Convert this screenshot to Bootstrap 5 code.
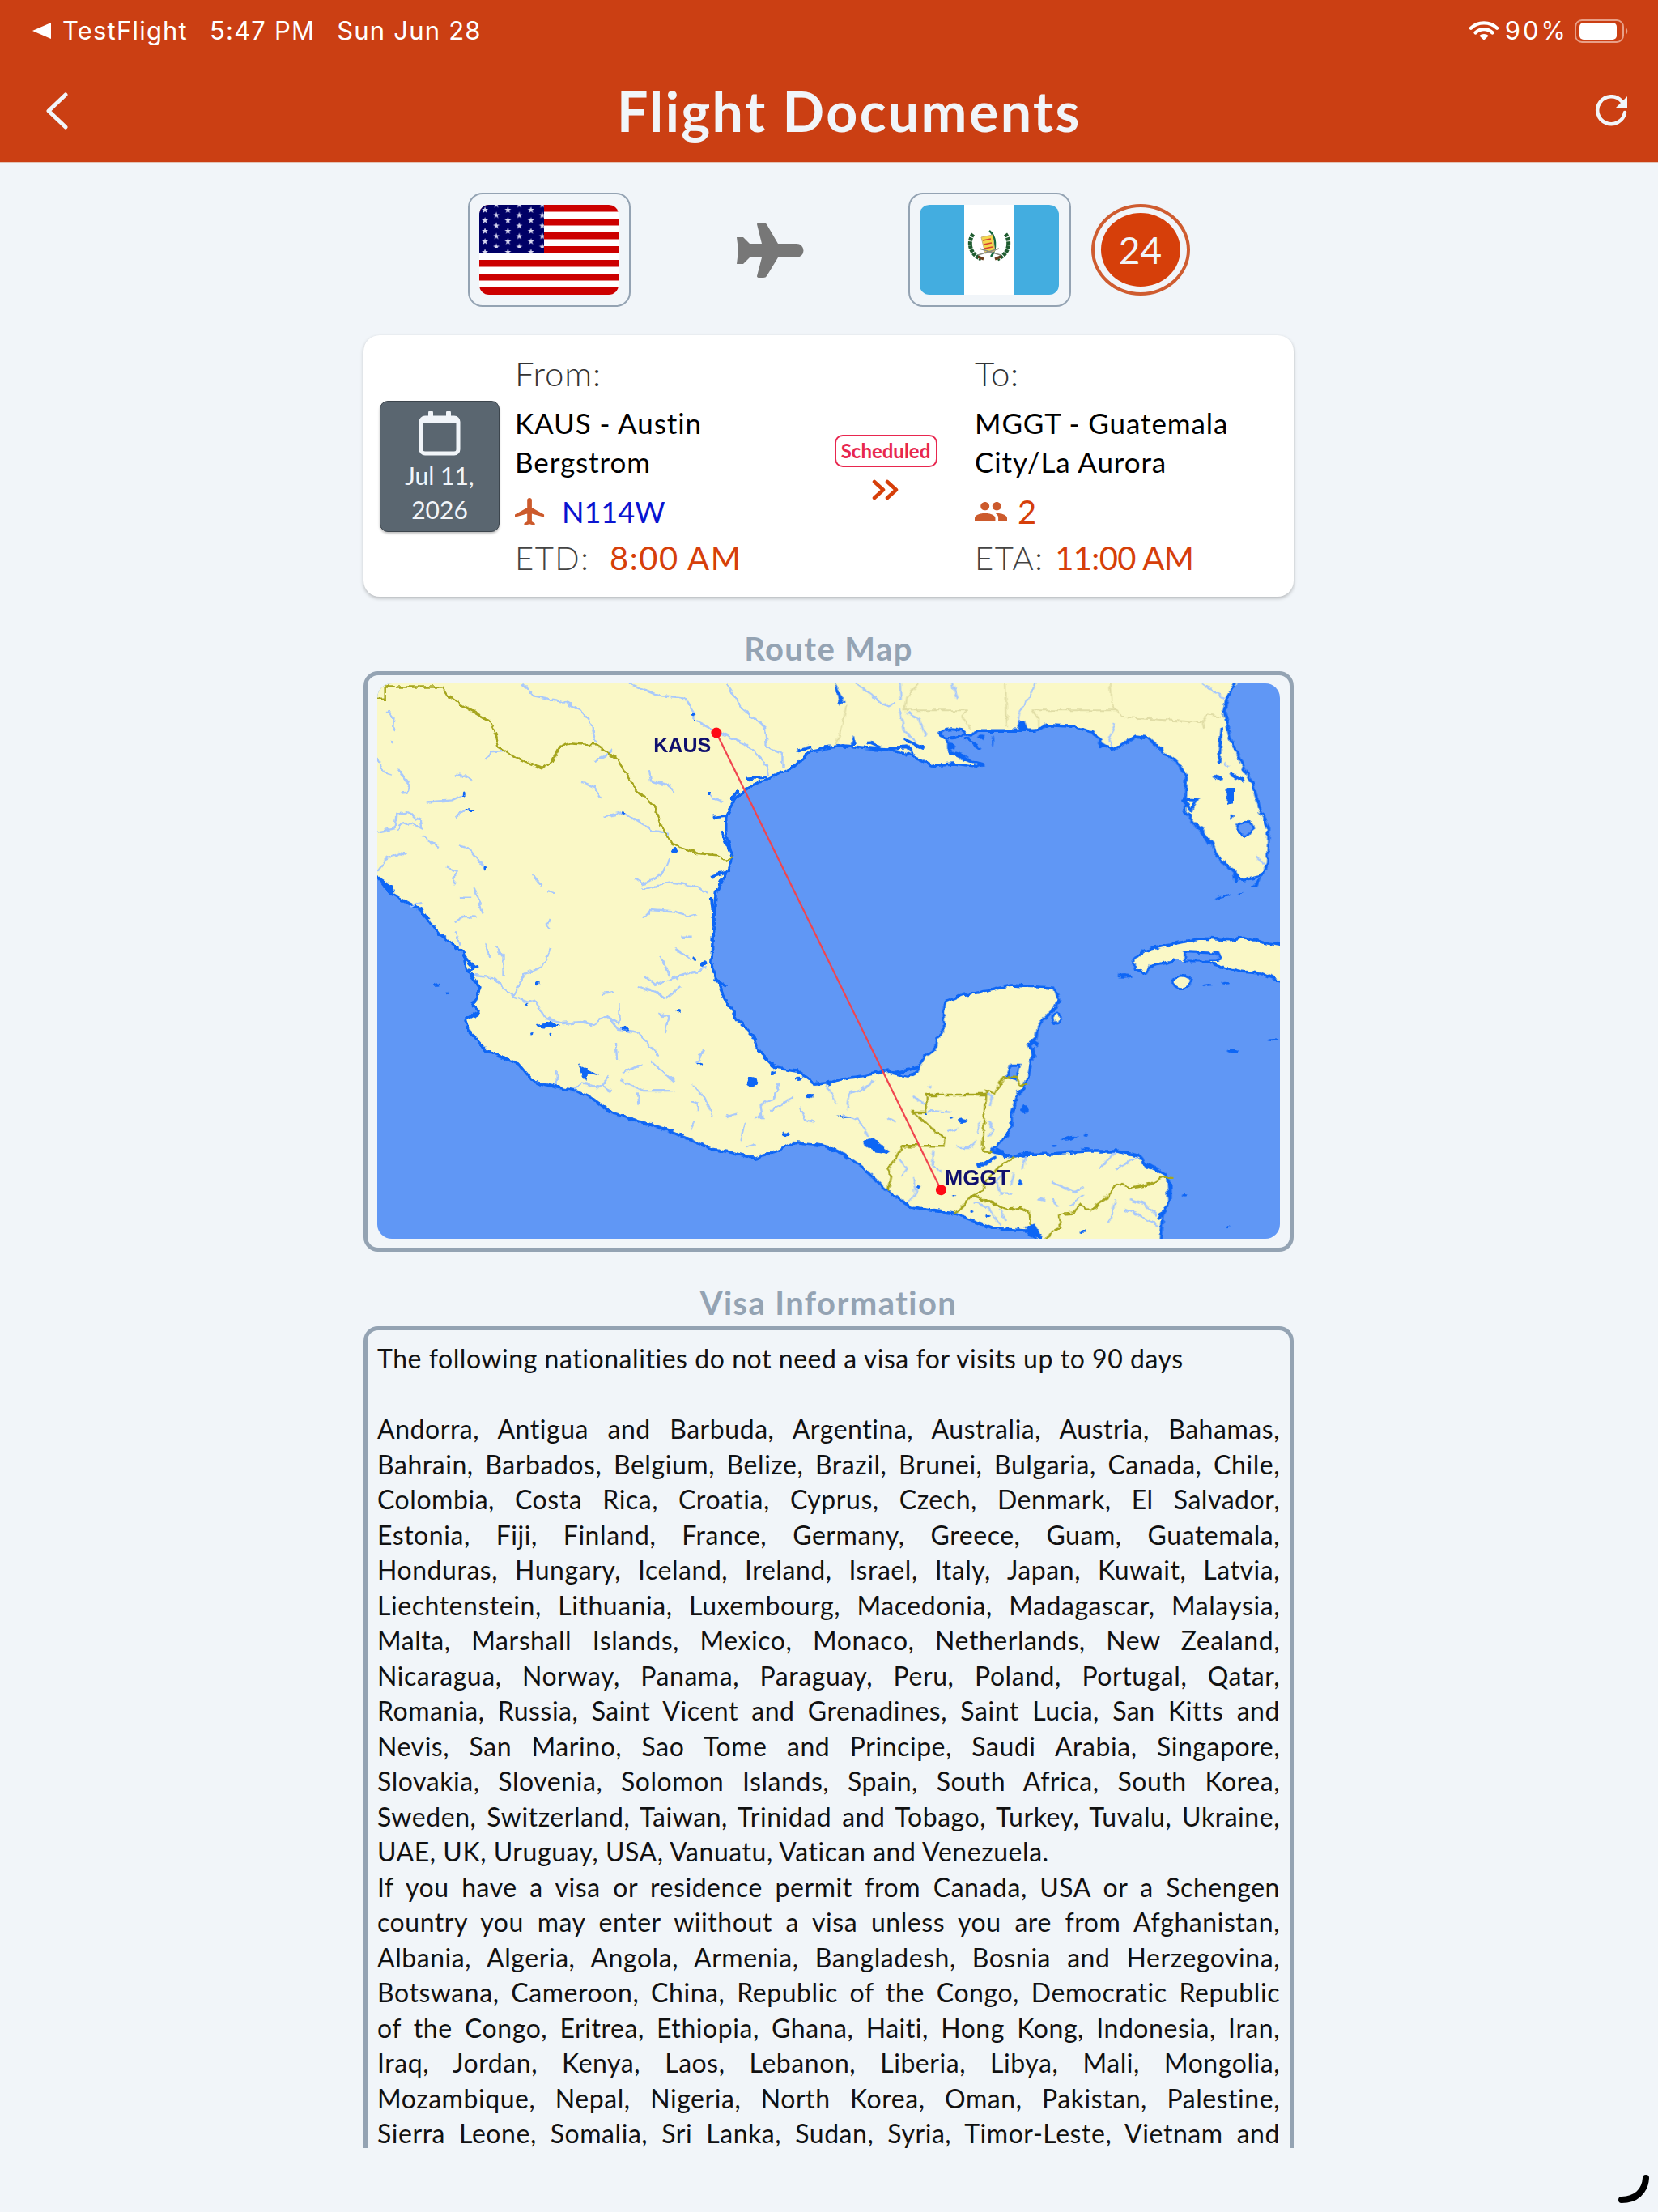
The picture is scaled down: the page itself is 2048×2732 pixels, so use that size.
<!DOCTYPE html>
<html lang="en">
<head>
<meta charset="UTF-8">
<title>Flight Documents</title>
<link href="https://cdn.jsdelivr.net/npm/bootstrap@5.3.2/dist/css/bootstrap.min.css" rel="stylesheet">
<style>
    html, body { height: 2732px; overflow: hidden; }
    body { background-color: #f1f5f9; font-family: Lato, "Noto Sans", sans-serif; position: relative; }
    .app-head { background-color: #cb3f13; height: 201px; color: #fff; border-bottom: 1px solid #e2c3b6; padding: 0 36px 0 40px; }
    .stat-row { height: 75px; font-family: Inter, sans-serif; font-size: 31px; letter-spacing: 1.2px; padding-top: 1px; }
    .stat-left span { margin-right: 27px; }
    .stat-left svg { margin-right: 13px; }
    .stat-pct { letter-spacing: 3px; }
    .nav-row { height: 125px; padding-left: 15px; }
    .back-ico { margin-top: 39px; }
    .page-name { font-size: 68px; font-weight: 700; letter-spacing: 2.4px; color: #f1f5f9; margin-left: 677px; margin-top: 7px; line-height: 110px; white-space: nowrap; }
    .reload-ico { margin-top: 42px; margin-left: auto; }
    .page-col { width: 1149px; margin-left: 449px; }
    .flag-row { padding-top: 37px; height: 178px; }
    .flag-box { width: 201px; height: 141px; border: 2.5px solid #94a3b3; border-radius: 18px; }
    .flag-box svg { border-radius: 12px; display: block; }
    .plane-big { margin: 37px 129px 0; }
    .count-ring { width: 122px; height: 113px; border: 4px solid #cf5c30; border-radius: 50%; padding: 7px 8px; margin: 14px 0 0 25px; }
    .count-fill { width: 100%; height: 100%; border-radius: 50%; background: #d63f0a; color: #f1f5f9; font-size: 46px; }
    .trip-card { margin-top: 35px; height: 323px; border: 0; border-radius: 20px; background: #fff; box-shadow: 0 2px 4px rgba(0,0,0,.25); padding: 0 20px; }
    .date-box { width: 148px; height: 162px; background: #5a6670; border: 1px solid #3c454d; border-radius: 10px; box-shadow: 0 2px 3px rgba(0,0,0,.25); color: #f1f5f9; font-size: 30px; line-height: 42px; text-align: center; margin-right: 19px; padding-top: 12px; }
    .date-box svg { display: block; margin: 0 auto 3px; }
    .from-col { width: 362px; }
    .mid-col { width: 192px; text-align: center; padding-top: 3px; }
    .to-col { margin-left: 14px; }
    .lbl-dir { font-size: 42px; font-weight: 300; letter-spacing: .8px; color: #333; line-height: 56px; margin-bottom: 9px; }
    .apt-name { font-size: 35px; letter-spacing: .9px; color: #000; line-height: 48px; margin-bottom: 10px; }
    .reg-row { font-size: 36px; line-height: 56px; color: #d63f0a; }
    .reg-row svg { margin-right: 20px; }
    .reg-row .ppl-ico { margin-right: 13px; }
    .ppl-num { font-size: 40px; }
    .tail-no { color: #0a14d0; }
    .time-row { font-size: 40px; letter-spacing: 1.5px; line-height: 58px; color: #d63f0a; white-space: nowrap; }
    .time-lbl { font-weight: 300; color: #444; margin-right: 13px; }
    .time-lbl-b { font-weight: 300; color: #444; margin-right: 2px; }
    .time-tight { letter-spacing: -.6px; }
    .sched-tag { display: inline-block; width: 127px; height: 40px; border: 2px solid #e8274f; border-radius: 10px; color: #e8274f; font-size: 24px; font-weight: 700; line-height: 36px; }
    .mid-col svg { display: block; margin: 15px auto 0; }
    .sect-name { text-align: center; color: #94a3b3; font-size: 40px; font-weight: 700; letter-spacing: 1.4px; line-height: 44px; margin-bottom: 6px; }
    .map-name { margin-top: 42px; }
    .visa-name { margin-top: 41px; margin-bottom: 7px; }
    .map-box { height: 717px; border: 5px solid #94a3b3; border-radius: 18px; padding: 10px 12px; }
    .map-svg { display: block; border-radius: 18px; width: 100%; height: 686px; }
    .m-fill { fill: #faf8c6; }
    .m-coast { fill: none; stroke: #1166f5; stroke-width: 3.5px; stroke-linejoin: round; vector-effect: non-scaling-stroke; }
    .m-riv { fill: none; stroke: #a9c9fb; stroke-width: 2.4px; vector-effect: non-scaling-stroke; }
    .m-bord { fill: none; stroke: #a5a51e; stroke-width: 2.5px; vector-effect: non-scaling-stroke; }
    .m-state { fill: none; stroke: #e0dda6; stroke-width: 2px; vector-effect: non-scaling-stroke; }
    .m-blob { fill: #1166f5; }
    .m-wet { fill: #6097f5; stroke: #1166f5; stroke-width: 3px; vector-effect: non-scaling-stroke; }
    .m-isle { fill: #faf8c6; stroke: #1166f5; stroke-width: 3px; vector-effect: non-scaling-stroke; }
    .m-thick { fill: none; stroke: #1166f5; stroke-width: 4px; stroke-linecap: round; vector-effect: non-scaling-stroke; }
    .m-label { font-family: "Liberation Sans", sans-serif; font-weight: 700; fill: #10106e; }
    .visa-box { height: 1015px; overflow: hidden; border: 5px solid #94a3b3; border-bottom: 0; border-radius: 18px 18px 0 0; padding: 13px 12px 0; color: #111; font-size: 32px; letter-spacing: .55px; line-height: 43.5px; }
    .visa-just { text-align: justify; text-align-last: justify; }
    .busy-arc { position: absolute; left: 1990px; top: 2680px; }
</style>
</head>
<body>

<!-- Cabecera -->
<header class="app-head">
    <div class="stat-row d-flex justify-content-between align-items-center">
        <div class="stat-left d-flex align-items-center">
            <svg width="24" height="20" viewBox="0 0 24 20"><path d="M23 0v20L0 10z" fill="#fff"/></svg>
            <span>TestFlight</span><span>5:47 PM</span><span>Sun Jun 28</span>
        </div>
        <div class="d-flex align-items-center">
            <svg width="36" height="24" viewBox="0 0 38 25" class="me-2"><path d="M2 9C11 0 27 0 36 9M8 15c6-6 16-6 22 0" fill="none" stroke="#fff" stroke-width="4.5" stroke-linecap="round"/><path d="M19 25l-6-6c3-3 9-3 12 0z" fill="#fff"/></svg>
            <span class="stat-pct">90%</span>
            <svg width="67" height="29" viewBox="0 0 67 29" class="ms-2"><rect x="1" y="1" width="59" height="27" rx="8" fill="none" stroke="#e8a088" stroke-width="2"/><rect x="6" y="4" width="46" height="21" rx="5" fill="#fff"/><path d="M63 10c3 1 3 8 0 9z" fill="#e8a088"/></svg>
        </div>
    </div>
    <div class="nav-row d-flex align-items-start">
        <svg class="back-ico" width="30" height="46" viewBox="0 0 30 46"><path d="M26 3L5 23l21 20" fill="none" stroke="#f1f5f9" stroke-width="5" stroke-linecap="round" stroke-linejoin="round"/></svg>
        <div class="page-name">Flight Documents</div>
        <svg class="reload-ico" width="42" height="40" viewBox="0 0 42 40"><path d="M33 8A17 17 0 1 0 37 22" fill="none" stroke="#f1f5f9" stroke-width="4.5" stroke-linecap="round"/><path d="M40 2v15H25z" fill="#f1f5f9"/></svg>
    </div>
</header>

<main class="page-col">
    <!-- Banderas -->
    <div class="flag-row d-flex justify-content-center align-items-start">
        <div class="flag-box d-flex align-items-center justify-content-center">
            <svg width="172" height="111" viewBox="0 0 172 111">
                <defs>
                    <pattern id="stA" width="28.4" height="13" patternUnits="userSpaceOnUse" x="2" y="1"><polygon points="5,1 6,4 9,4 6.6,5.8 7.5,9 5,7 2.5,9 3.4,5.8 1,4 4,4" fill="#d8d8f0"/></pattern>
                    <pattern id="stB" width="28.4" height="13" patternUnits="userSpaceOnUse" x="16" y="7.5"><polygon points="5,1 6,4 9,4 6.6,5.8 7.5,9 5,7 2.5,9 3.4,5.8 1,4 4,4" fill="#d8d8f0"/></pattern>
                </defs>
                <rect width="172" height="111" fill="#fff"/>
                <g fill="#cc0000"><rect y="0" width="172" height="8.5"/><rect y="17" width="172" height="8.5"/><rect y="34" width="172" height="8.5"/><rect y="51" width="172" height="8.5"/><rect y="68" width="172" height="8.5"/><rect y="85" width="172" height="8.5"/><rect y="102" width="172" height="9"/></g>
                <rect width="80" height="59" fill="#000066"/>
                <rect width="80" height="59" fill="url(#stA)"/>
                <rect width="80" height="53" fill="url(#stB)"/>
            </svg>
        </div>
        <svg class="plane-big" width="85" height="68" viewBox="0 0 85 68"><path d="M2 18h8l8 8h15L27 2q0-2 3-2h5q3 0 4 2l14 24h23a8.500 8.500 0 0 1 0 17H53L39 66q-1 2-4 2h-5q-3 0-3-2l6-23H18l-8 8H2l2-16.500z" fill="#777"/></svg>
        <div class="flag-box d-flex align-items-center justify-content-center">
            <svg width="172" height="111" viewBox="0 0 172 111">
                <rect width="172" height="111" fill="#fff"/>
                <rect width="55" height="111" fill="#43ade0"/><rect x="117" width="55" height="111" fill="#43ade0"/>
                <path d="M66 36c-6 8-6 24 10 31M106 36c6 8 6 24-10 31" fill="none" stroke="#1f5c30" stroke-width="5" stroke-dasharray="4 1"/>
                <path d="M86 32c8 6 10 22 2 32" fill="none" stroke="#14683e" stroke-width="2.500"/>
                <path d="M76 40l14-3 3 20-12 3z" fill="#f4d74c" stroke="#c9b27c"/>
                <path d="M78 44l10-2M79 49l10-2M80 54l10-2" stroke="#d64030" stroke-width="1.500"/>
                <path d="M72 62l26-8M100 62l-26-8" stroke="#8a8a80" stroke-width="1.500"/>
                <path d="M72 64l7 3M100 64l-7 3" stroke="#6b3d1c" stroke-width="3"/>
            </svg>
        </div>
        <div class="count-ring"><div class="count-fill d-flex align-items-center justify-content-center">24</div></div>
    </div>

    <!-- Tarjeta del vuelo -->
    <div class="card trip-card flex-row align-items-center">
        <div class="date-box">
            <svg width="52" height="55" viewBox="0 0 52 55"><path d="M15 2v8M37 2v8" stroke="#f1f5f9" stroke-width="6" stroke-linecap="round"/><rect x="3" y="8" width="46" height="44" rx="5" fill="none" stroke="#f1f5f9" stroke-width="5"/><rect x="3" y="8" width="46" height="7" fill="#f1f5f9"/></svg>
            Jul 11,<br>2026
        </div>
        <div class="from-col">
            <div class="lbl-dir">From:</div>
            <div class="apt-name">KAUS - Austin<br>Bergstrom</div>
            <div class="reg-row d-flex align-items-center"><svg width="38" height="34" viewBox="2 2 20 20" preserveAspectRatio="none"><path d="M21 16v-2l-8-5V3.500c0-.83-.67-1.500-1.500-1.500S10 2.670 10 3.500V9l-8 5v2l8-2.500V19l-2 1.500V22l3.500-1 3.500 1v-1.500L13 19v-5.500l8 2.500z" fill="#cc5a2c"/></svg><span class="tail-no">N114W</span></div>
            <div class="time-row"><span class="time-lbl">ETD:</span> 8:00 AM</div>
        </div>
        <div class="mid-col">
            <div class="sched-tag">Scheduled</div>
            <svg width="34" height="26" viewBox="0 0 34 26"><path d="M3 3l11 10L3 23M19 3l11 10-11 10" fill="none" stroke="#d63f0a" stroke-width="4.500" stroke-linecap="round" stroke-linejoin="round"/></svg>
        </div>
        <div class="to-col">
            <div class="lbl-dir">To:</div>
            <div class="apt-name">MGGT - Guatemala<br>City/La Aurora</div>
            <div class="reg-row d-flex align-items-center"><svg class="ppl-ico" width="40" height="24" viewBox="1 5 22 14" preserveAspectRatio="none"><path d="M16 11c1.660 0 2.990-1.340 2.990-3S17.660 5 16 5c-1.660 0-3 1.340-3 3s1.340 3 3 3zm-8 0c1.660 0 2.990-1.340 2.990-3S9.660 5 8 5C6.340 5 5 6.340 5 8s1.340 3 3 3zm0 2c-2.330 0-7 1.170-7 3.500V19h14v-2.500c0-2.330-4.670-3.500-7-3.500zm8 0c-.29 0-.62.02-.97.05 1.160.84 1.970 1.970 1.970 3.450V19h6v-2.500c0-2.330-4.670-3.500-7-3.500z" fill="#cc5a2c"/></svg><span class="ppl-num">2</span></div>
            <div class="time-row"><span class="time-lbl-b">ETA:</span> <span class="time-tight">11:00 AM</span></div>
        </div>
    </div>

    <!-- Mapa de la ruta -->
    <div class="sect-name map-name">Route Map</div>
    <div class="map-box">
        <svg class="map-svg" viewBox="0 0 1114 686" preserveAspectRatio="none">
            <defs>
                <filter id="jag" x="-2%" y="-2%" width="104%" height="104%" filterUnits="objectBoundingBox">
                    <feTurbulence type="fractalNoise" baseFrequency=".11" numOctaves="2" seed="4" result="n"/>
                    <feDisplacementMap in="SourceGraphic" in2="n" scale="7" xChannelSelector="R" yChannelSelector="G"/>
                </filter>
            </defs>
            <rect width="1114" height="686" fill="#6097f5"/>

            <g filter="url(#jag)">
            <!-- oeste: Mexico y Texas -->
            <g transform="scale(.35714,.4375)">
                <path class="m-fill" d="M-40 -40H1568V180L1500 190 1440 235 1350 270 1290 290 1235 325 1205 375 1205 420 1228 490 1210 530 1170 590 1160 700 1155 790 1170 830 1200 890 1240 945 1300 995 1320 1040 1375 1085 1450 1095 1510 1130 1568 1125V1310L1500 1300 1440 1295 1380 1320 1300 1340 1230 1325 1160 1315 1070 1285 1000 1260 920 1240 810 1212 740 1170 690 1150 620 1140 540 1125 490 1075 380 1040 320 985 305 950 350 930 330 910 355 860 310 810 295 760 220 710 150 640 50 595 0 545 -40 520Z"/>
                <path class="m-coast" d="M1568 180L1500 190 1440 235 1350 270 1290 290 1235 325 1205 375 1205 420 1228 490 1210 530 1170 590 1160 700 1155 790 1170 830 1200 890 1240 945 1300 995 1320 1040 1375 1085 1450 1095 1510 1130 1568 1125"/>
                <path class="m-coast" d="M1568 1310L1500 1300 1440 1295 1380 1320 1300 1340 1230 1325 1160 1315 1070 1285 1000 1260 920 1240 810 1212 740 1170 690 1150 620 1140 540 1125 490 1075 380 1040 320 985 305 950 350 930 330 910 355 860 310 810 295 760 220 710 150 640 50 595 0 545 -40 520"/>
                <path class="m-riv" d="M500 0L540 35 640 50 700 75 740 115 755 170M870 0L980 35 1060 40 1095 85 1095 105 1172 135 1270 170 1340 220 1355 260M1205 0L1260 70 1340 125 1345 180 1400 200 1400 240M35 75L60 100 55 135M50 160L52 172M0 210L25 255 50 260M70 240L110 285 105 310 85 312M265 265L285 255 330 275M170 335L260 330 300 315M270 378L300 360 335 358M380 215L390 195 440 192M750 220L790 205 810 185M705 280L750 295 775 325M940 245L945 275 1010 290 1025 305M785 378L850 365 950 415 1010 425M1145 310L1160 325 1195 335M0 420L60 410 65 370 100 365 150 385 155 410 120 395 80 400 70 415M155 432L215 462M285 458L315 465 370 520M0 530L30 495 75 480 105 485M240 520L270 530 265 570M335 575L365 650M285 605L325 605M265 675L300 658 340 660M115 630L155 620M270 700L285 740M370 735L390 775M410 745L435 770 435 825M1010 490L990 530 950 555 915 565 890 550M915 582L1020 562 1090 570 1140 590M920 660L945 640 1020 645 1080 658 1105 652M535 540L565 570M590 590L615 595M595 665L585 685 595 695M330 825L400 830 470 885 510 820 570 800 600 750M470 885L520 900 545 895 580 945 640 960 710 955 740 965 790 940 835 960 835 905M800 945L830 975 900 985 970 1050M1050 715L1090 715M1025 745L1085 780M980 770L1010 825M925 825L960 850 1010 835 1090 815 1140 805M900 855L960 870 1000 890 1050 855M780 875L820 870M975 930L1005 945 995 985M1110 1050L1130 1035 1105 1070M850 1100L915 1075M945 1065L1025 1125M840 1120L920 1150 1030 1150M1090 1130L1130 1170 1160 1220M1390 1125L1370 1170 1325 1190 1330 1225 1305 1225M1360 1205L1440 1170M1460 1200L1480 1235 1510 1240M1205 1225L1245 1215M1270 1240L1255 1290M1275 1310L1305 1300M620 1095L620 1135M680 1145L700 1130 770 1140 800 1110M825 1015L828 1065M1080 1260L1095 1235M1085 1180L1110 1185 1110 1205M900 1155L905 1190M775 1135L810 1150"/>
                <path class="m-bord" d="M-20 45L27 45 27 10 225 10 245 35 300 65 385 105 410 145 420 180 480 210 570 240 600 225 630 180 665 170 755 175 830 215 885 290 965 355 980 400 1020 455 1110 480 1170 485 1205 500 1230 490"/>
                <g class="m-blob">
                    <path d="M690 1075L715 1085 770 1108 725 1100 720 1125 705 1100Z"/>
                    <path d="M545 962L600 955 630 965 600 972 550 968Z"/>
                    <path d="M5 548L50 570 60 590 40 590Z"/>
                    <ellipse cx="1295" cy="1125" rx="18" ry="14"/>
                    <ellipse cx="1028" cy="472" rx="14" ry="8"/>
                    <ellipse cx="300" cy="312" rx="4" ry="7"/><ellipse cx="322" cy="358" rx="15" ry="3"/><ellipse cx="370" cy="520" rx="5" ry="7"/>
                    <ellipse cx="848" cy="365" rx="6" ry="5"/><ellipse cx="532" cy="987" rx="6" ry="4"/><ellipse cx="601" cy="987" rx="4" ry="4"/>
                    <ellipse cx="555" cy="847" rx="6" ry="4"/><ellipse cx="1043" cy="925" rx="6" ry="4"/><ellipse cx="1097" cy="778" rx="5" ry="5"/><ellipse cx="1128" cy="792" rx="9" ry="10"/>
                    <ellipse cx="1410" cy="1273" rx="14" ry="8"/><ellipse cx="1495" cy="1165" rx="9" ry="8"/><ellipse cx="1455" cy="1115" rx="10" ry="5"/><ellipse cx="1115" cy="1073" rx="10" ry="4"/>
                    <ellipse cx="855" cy="975" rx="14" ry="5"/><ellipse cx="1095" cy="88" rx="8" ry="4"/><ellipse cx="1095" cy="105" rx="4" ry="3"/><ellipse cx="205" cy="850" rx="12" ry="4"/><ellipse cx="240" cy="875" rx="5" ry="3"/>
                    <ellipse cx="520" cy="907" rx="5" ry="4"/><ellipse cx="1148" cy="312" rx="6" ry="7"/><ellipse cx="1368" cy="1098" rx="8" ry="8"/>
                </g>
                <path class="m-thick" d="M1280 268L1340 265M1455 190L1495 182M1225 325L1245 305M1165 378L1205 375M1190 420L1215 470M1160 545L1200 535M1155 610L1165 680M300 770L335 800M1170 835L1205 855M315 810L345 800"/>
                <path class="m-riv" style="stroke:#1166f5" d="M330 905L350 925 310 945"/>
            </g>

            <!-- este: Golfo, Luisiana y Florida -->
            <g transform="translate(554,0) scale(.35714,.33333)">
                <path class="m-fill" d="M0 -40H1420V0L1385 60 1375 100 1395 200 1440 310 1475 380 1500 470 1530 540 1525 670 1500 715 1440 730 1410 700 1350 640 1330 590 1280 530 1240 470 1245 350 1215 295 1160 250 1110 200 1070 195 1000 245 950 225 920 180 850 160 770 155 720 175 600 175 520 175 500 195 430 170 390 180 420 210 420 240 440 260 480 280 540 300 520 310 440 300 370 305 320 280 250 250 150 240 60 230 0 240Z"/>
                <path class="m-fill" d="M1060 1029L1100 990 1200 965 1290 945 1400 950 1440 940 1510 960 1600 975V1029Z"/>
                <path class="m-state" d="M70 80L55 160 35 230M320 0L280 50 272 100 485 100 470 120 495 165M620 0L625 160M710 100L1000 100 1020 125 1300 145 1320 115 1380 125M710 100L735 130 735 165M980 0L985 70 1000 100M1300 145L1305 165"/>
                <path class="m-riv" d="M100 0L210 85 240 70M255 0L258 60M435 0L455 55M725 0L670 110 665 150M255 100L270 175 310 215M280 110L320 130 345 195M1000 150L975 200 990 235M1300 0L1380 60M1485 640L1515 670M1375 295L1390 310"/>
                <path class="m-coast" d="M1420 -20L1385 60 1375 100 1395 200 1440 310 1475 380 1500 470 1530 540 1525 670 1500 715 1440 730 1410 700 1350 640 1330 590 1280 530 1240 470 1245 350 1215 295 1160 250 1110 200 1070 195 1000 245 950 225 920 180 850 160 770 155 720 175 600 175 520 175 500 195 430 170 390 180 420 210 420 240 440 260 480 280 540 300 520 310 440 300 370 305 320 280 250 250 150 240 60 230 0 240"/>
                <path class="m-coast" d="M1060 1029L1100 990 1200 965 1290 945 1400 950 1440 940 1510 960 1600 975"/>
                <path class="m-wet" d="M1240 1029L1240 995 1350 1000 1360 1020 1350 1029Z"/>
                <ellipse class="m-wet" cx="435" cy="185" rx="42" ry="18"/>
                <ellipse class="m-wet" cx="1447" cy="538" rx="25" ry="27"/>
                <g class="m-blob">
                    <path d="M30 0L65 70 45 80 35 30Z"/>
                    <path d="M85 225L95 195 105 225Z"/><path d="M140 208L195 235 185 242 140 222Z"/>
                    <path d="M670 135L685 135 700 180 655 180Z"/><path d="M760 145L785 155 735 178Z"/>
                    <path d="M1340 335L1370 350 1365 365 1335 345Z"/><path d="M1385 390L1410 390 1410 445 1385 450Z"/><path d="M1395 485L1410 487 1400 505Z"/>
                    <ellipse cx="535" cy="198" rx="10" ry="8"/><ellipse cx="578" cy="215" rx="3" ry="22"/><ellipse cx="430" cy="232" rx="12" ry="12"/>
                    <path d="M1340 798L1395 778 1390 790 1345 802Z"/><path d="M1415 783L1440 772 1430 783Z"/>
                    <path d="M1470 755L1505 715 1490 755Z"/>
                </g>
                <path class="m-thick" d="M1365 165L1358 290M1400 335L1440 360M1235 430L1280 432 1262 470 1240 440M1295 535L1320 590M1415 730L1410 695M1375 100L1385 60M270 208L335 240M215 240L280 235 300 260M430 255L480 270M485 205L530 240M950 225L950 235"/>
            </g>

            <!-- sur: Yucatan y Centroamerica -->
            <g transform="translate(554,343) scale(.35714,.33333)">
                <path class="m-fill" d="M0 455L60 435 130 425 215 405 240 415 250 410 320 390 340 360 375 330 385 285 405 265 405 190 415 150 470 125 560 110 640 90 720 95 790 100 805 145 790 175 750 215 730 250 725 290 700 310 715 340 705 380 690 460 660 500 640 560 640 610 620 650 570 705 640 725 690 715 760 715 900 705 1000 705 1080 720 1110 760 1175 790 1190 830 1190 880 1165 940 1155 1060H750L700 1000 580 990 440 935 300 915 215 855 120 760 50 710 0 685Z"/>
                <path class="m-fill" d="M1060 0L1065 30 1105 45 1115 20 1200 0ZM1310 0L1380 25 1440 40 1500 45 1600 85V0Z"/>
                <path class="m-riv" d="M0 460L40 530M70 550L80 490 130 470 165 440M60 570L110 590 150 650M300 500L340 530M355 470L365 460M350 555L430 560M215 585L240 600M420 630L455 620M550 490L575 500 565 540M555 590L580 620 560 650M450 690L500 690 520 670M525 590L525 640M370 700L365 750 395 780M250 730L280 770 265 800M300 800L310 860 290 890M650 780L640 830M690 715L680 770M945 770L1000 705M780 820L860 855 885 840M1000 770L1080 720M1050 885L1100 900 1140 940M1030 920L1080 940 1150 985M730 880L755 885M780 880L800 910M840 910L890 865M1000 880L980 970M600 920L620 960M510 895L560 910 600 980M620 780L590 820 600 860 640 860"/>
                <path class="m-coast" d="M0 455L60 435 130 425 215 405 240 415 250 410 320 390 340 360 375 330 385 285 405 265 405 190 415 150 470 125 560 110 640 90 720 95 790 100 805 145 790 175 750 215 730 250 725 290 700 310 715 340 705 380 690 460 660 500 640 560 640 610 620 650 570 705 640 725 690 715 760 715 900 705 1000 705 1080 720 1110 760 1175 790 1190 830 1190 880 1165 940 1155 1060"/>
                <path class="m-coast" d="M750 1060L700 1000 580 990 440 935 300 915 215 855 120 760 50 710 0 685"/>
                <path class="m-coast" d="M1060 0L1065 30 1105 45 1115 20 1200 0M1310 0L1380 25 1440 40 1500 45 1600 85"/>
                <path class="m-wet" d="M235 420L320 390 315 410 280 430Z"/>
                <path class="m-wet" d="M640 385L670 385 655 440 625 425Z"/>
                <path class="m-wet" d="M520 760L590 725 545 760Z"/>
                <ellipse class="m-isle" cx="795" cy="213" rx="13" ry="18"/>
                <ellipse class="m-isle" cx="1230" cy="78" rx="30" ry="24"/>
                <g class="m-blob">
                    <path d="M35 570L85 580 60 582Z"/><path d="M130 670L160 655 225 710 215 715 165 705 135 685Z"/>
                    <ellipse cx="470" cy="590" rx="18" ry="7"/><ellipse cx="430" cy="580" rx="8" ry="4"/><ellipse cx="345" cy="563" rx="5" ry="5"/><ellipse cx="320" cy="838" rx="8" ry="7"/>
                    <ellipse cx="440" cy="865" rx="5" ry="4"/><ellipse cx="503" cy="928" rx="5" ry="5"/><ellipse cx="560" cy="945" rx="7" ry="7"/><ellipse cx="665" cy="988" rx="5" ry="5"/><ellipse cx="672" cy="820" rx="7" ry="9"/>
                    <path d="M685 985L720 970 745 1020 700 1010Z"/><ellipse cx="715" cy="340" rx="10" ry="22"/><ellipse cx="685" cy="550" rx="10" ry="20"/><ellipse cx="655" cy="515" rx="10" ry="4"/>
                    <ellipse cx="840" cy="656" rx="28" ry="7" transform="rotate(-12 840 656)"/><ellipse cx="897" cy="643" rx="10" ry="5"/><ellipse cx="787" cy="685" rx="8" ry="4"/><ellipse cx="895" cy="695" rx="14" ry="5"/>
                    <ellipse cx="1405" cy="333" rx="20" ry="7"/><ellipse cx="1545" cy="293" rx="20" ry="5"/><ellipse cx="1240" cy="868" rx="8" ry="4"/><ellipse cx="1390" cy="983" rx="5" ry="5"/>
                    <ellipse cx="1320" cy="88" rx="16" ry="4"/><ellipse cx="1380" cy="82" rx="12" ry="5"/><ellipse cx="1030" cy="55" rx="25" ry="7"/><ellipse cx="890" cy="1000" rx="8" ry="7"/>
                </g>
                <path class="m-thick" d="M1095 745L1170 790M1180 810L1185 890M1150 950L1160 930M590 700L620 720M660 490L680 470M715 300L730 310M700 1010L745 1025"/>
                <path class="m-bord" d="M345 558L345 495 550 495 550 480 580 490 615 430 660 432 668 458 700 458M550 495L545 600 540 705 570 708M345 558L298 558 345 600 385 640 412 655 408 685 265 685 215 770 225 800 215 855M650 725L590 770 545 825 545 850 505 870 445 935M505 870L580 900 620 920 670 915 700 930 705 975M1200 805L1165 800 1120 825 1050 840 1010 825 985 850 970 880 910 925 880 905 850 935 805 940 810 990 780 1000 755 1040"/>
            </g>
            </g>

            <line x1="418.500" y1="61" x2="695.800" y2="625.700" stroke="#f0454f" stroke-width="2.200"/>
            <ellipse cx="418.500" cy="61" rx="6.500" ry="6.500" fill="#ff0a14"/>
            <ellipse cx="695.800" cy="625.700" rx="6.500" ry="6.500" fill="#ff0a14"/>
            <text class="m-label" x="341" y="85" font-size="25">KAUS</text>
            <text class="m-label" x="700" y="620" font-size="27">MGGT</text>
        </svg>
    </div>

    <!-- Informacion de visa -->
    <div class="sect-name visa-name">Visa Information</div>
    <div class="visa-box">
        <div>The following nationalities do not need a visa for visits up to 90 days</div>
        <br>
        <div class="visa-just">
            Andorra, Antigua and Barbuda, Argentina, Australia, Austria, Bahamas,<br>
            Bahrain, Barbados, Belgium, Belize, Brazil, Brunei, Bulgaria, Canada, Chile,<br>
            Colombia, Costa Rica, Croatia, Cyprus, Czech, Denmark, El Salvador,<br>
            Estonia, Fiji, Finland, France, Germany, Greece, Guam, Guatemala,<br>
            Honduras, Hungary, Iceland, Ireland, Israel, Italy, Japan, Kuwait, Latvia,<br>
            Liechtenstein, Lithuania, Luxembourg, Macedonia, Madagascar, Malaysia,<br>
            Malta, Marshall Islands, Mexico, Monaco, Netherlands, New Zealand,<br>
            Nicaragua, Norway, Panama, Paraguay, Peru, Poland, Portugal, Qatar,<br>
            Romania, Russia, Saint Vicent and Grenadines, Saint Lucia, San Kitts and<br>
            Nevis, San Marino, Sao Tome and Principe, Saudi Arabia, Singapore,<br>
            Slovakia, Slovenia, Solomon Islands, Spain, South Africa, South Korea,<br>
            Sweden, Switzerland, Taiwan, Trinidad and Tobago, Turkey, Tuvalu, Ukraine,
        </div>
        <div>UAE, UK, Uruguay, USA, Vanuatu, Vatican and Venezuela.</div>
        <div class="visa-just">
            If you have a visa or residence permit from Canada, USA or a Schengen<br>
            country you may enter wiithout a visa unless you are from Afghanistan,<br>
            Albania, Algeria, Angola, Armenia, Bangladesh, Bosnia and Herzegovina,<br>
            Botswana, Cameroon, China, Republic of the Congo, Democratic Republic<br>
            of the Congo, Eritrea, Ethiopia, Ghana, Haiti, Hong Kong, Indonesia, Iran,<br>
            Iraq, Jordan, Kenya, Laos, Lebanon, Liberia, Libya, Mali, Mongolia,<br>
            Mozambique, Nepal, Nigeria, North Korea, Oman, Pakistan, Palestine,<br>
            Sierra Leone, Somalia, Sri Lanka, Sudan, Syria, Timor-Leste, Vietnam and
        </div>
    </div>
</main>

<svg class="busy-arc" width="50" height="46" viewBox="0 0 50 46"><path d="M43 10C42 27 30 37 13 37" fill="none" stroke="#000" stroke-width="8" stroke-linecap="round"/></svg>

<script src="https://cdn.jsdelivr.net/npm/bootstrap@5.3.2/dist/js/bootstrap.bundle.min.js"></script>
</body>
</html>
